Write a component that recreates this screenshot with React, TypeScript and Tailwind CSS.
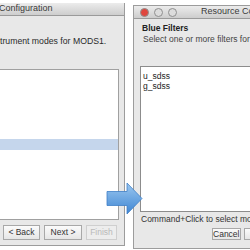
import React from 'react';

const font = { fontFamily: '"Liberation Sans", Arial, sans-serif' };

const Light = ({ color }: { color: string }) => (
  <span className={`inline-block h-[9px] w-[9px] rounded-full border border-[#8f8f8f] ${color}`} />
);

const App = () => {
  return (
    <div className="relative h-[250px] w-[250px] overflow-hidden bg-white" style={font}>
      {/* left window */}
      <div className="absolute left-0 top-[3px] flex h-[243px] w-[125px] flex-col border-r border-b border-[#9c9c9c] bg-[#e8e8e8]">
        <div className="flex h-[13px] items-center border-b border-[#9a9a9a] bg-gradient-to-b from-[#ececec] to-[#cdcdcd] text-[9px] text-[#3a3a3a]">
          <span className="-ml-[1px]">Configuration</span>
        </div>
        <div className="mt-[20px] whitespace-nowrap text-[8.7px] leading-[10px] text-[#2a2a2a]">trument modes for MODS1.</div>
        <div className="mt-[23px] mr-[5px] flex h-[151px] flex-col border border-l-0 border-[#a0a0a0] bg-white">
          <div className="mt-[69px] h-[11px] bg-[#c5d6ec]" />
        </div>
        <div className="mt-[5px] flex gap-[4px] pl-[3px] text-[8.5px]">
          <div className="flex h-[15px] w-[37px] items-center justify-center border border-[#a8a8a8] bg-gradient-to-b from-[#fbfbfb] to-[#e6e6e6] text-[#333]">&lt; Back</div>
          <div className="flex h-[15px] w-[38px] items-center justify-center border border-[#a8a8a8] bg-gradient-to-b from-[#fbfbfb] to-[#e6e6e6] text-[#333]">Next &gt;</div>
          <div className="flex h-[15px] w-[31px] items-center justify-center border border-[#cfcfcf] bg-[#ededed] text-[#b9b9b9]">Finish</div>
        </div>
      </div>

      {/* right window */}
      <div className="absolute left-[133px] top-[5px] flex h-[244px] w-[140px] flex-col border border-[#9c9c9c] bg-[#e8e8e8]">
        <div className="flex h-[13px] shrink-0 items-center border-b border-[#9a9a9a] bg-gradient-to-b from-[#ececec] to-[#cdcdcd] pl-[6px] text-[9px] text-[#3a3a3a]">
          <div className="flex gap-[5px]">
            <Light color="bg-[#e0463e]" />
            <Light color="bg-[#dcdcdc]" />
            <Light color="bg-[#dcdcdc]" />
          </div>
          <span className="ml-[24px] whitespace-nowrap">Resource Configuration</span>
        </div>
        <div className="mt-[4px] pl-[8px] text-[8.5px] font-bold leading-[10px] text-[#222]">Blue Filters</div>
        <div className="mt-[1px] pl-[9px] whitespace-nowrap text-[8.5px] leading-[10px] text-[#444]">Select one or more filters for</div>
        <div className="ml-[6px] mt-[22px] flex h-[146px] shrink-0 flex-col border border-[#8c8c8c] bg-white pl-[2px] pt-[4px] text-[8.5px] leading-[10px] text-[#222]">
          <span>u_sdss</span>
          <span>g_sdss</span>
        </div>
        <div className="mt-[2px] pl-[7px] whitespace-nowrap text-[8.5px] leading-[10px] text-[#333]">Command+Click to select more</div>
        <div className="mt-[4px] flex gap-[3px] pl-[78px] text-[8.5px]">
          <div className="flex h-[12px] w-[32px] items-center justify-center border border-[#a8a8a8] bg-gradient-to-b from-[#fbfbfb] to-[#e6e6e6] text-[#333]">Cancel</div>
          <div className="flex h-[12px] w-[32px] items-center justify-center border border-[#a8a8a8] bg-gradient-to-b from-[#fbfbfb] to-[#e6e6e6] text-[#333]">OK</div>
        </div>
      </div>

      {/* arrow */}
      <svg className="absolute left-[106px] top-[182px]" width="38" height="33" viewBox="0 0 38 33">
        <defs>
          <linearGradient id="ar" x1="0" y1="0" x2="0" y2="1">
            <stop offset="0" stopColor="#9cc8f0" />
            <stop offset="1" stopColor="#3f86d3" />
          </linearGradient>
        </defs>
        <path d="M1 9.5 H21 V1 L36 16.5 L21 32 V23.5 H1 Z" fill="url(#ar)" stroke="#3f7fc6" strokeWidth="0.8" />
      </svg>
    </div>
  );
};

export default App;
